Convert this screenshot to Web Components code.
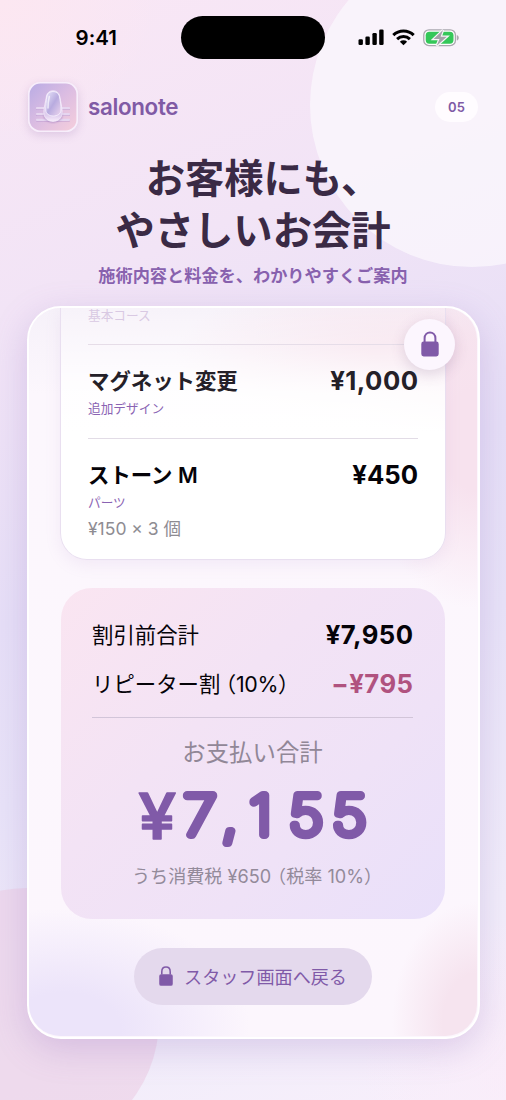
<!DOCTYPE html>
<html lang="ja">
<head>
<meta charset="utf-8">
<title>salonote</title>
<style>
html,body{margin:0;padding:0}
body{width:506px;height:1100px;overflow:hidden;font-family:Inter,"Noto Sans CJK JP",sans-serif;color:#050308}
</style>
</head>
<body>
<salon-screen>
  <status-bar></status-bar>
  <brand-header number="05">salonote</brand-header>
  <hero-title>
    <span slot="one">お客様にも、</span>
    <span slot="two">やさしいお会計</span>
    <span slot="sub">施術内容と料金を、わかりやすくご案内</span>
  </hero-title>
  <glass-panel>
    <receipt-list>
      <receipt-row class="faded" kind="基本コース"></receipt-row>
      <receipt-row class="soft" name="マグネット変更" kind="追加デザイン" price="¥1,000"></receipt-row>
      <receipt-row name="ストーン M" kind="パーツ" price="¥450" detail="¥150 × 3 個"></receipt-row>
    </receipt-list>
    <total-card></total-card>
    <staff-button>スタッフ画面へ戻る</staff-button>
  </glass-panel>
</salon-screen>
<script>
const define = (name, html, setup) => customElements.define(name, class extends HTMLElement {
  constructor() {
    super();
    this.attachShadow({ mode: 'open' });
  }
  connectedCallback() {
    if (this.shadowRoot.childNodes.length) return;
    this.shadowRoot.innerHTML = html;
    if (setup) setup(this, this.shadowRoot);
  }
});

define('salon-screen', `<style>
:host{display:flex;flex-direction:column;position:relative;width:506px;height:1100px;overflow:hidden;
background:radial-gradient(circle at 100% 97%,#faecf9b0 0,#faecf900 150px),radial-gradient(ellipse 160px 140px at 0 0,#fce7f1 0,#fce7f100 100%),linear-gradient(158deg,#f9e7f5 0%,#f2e4f6 24%,#e6dff7 48%,#e8e3f8 62%,#f1edfa 84%,#f8effb 100%)}
.orb{position:absolute;border-radius:50%}
.a{left:310px;top:-57px;width:324px;height:324px;background:#faf6fccc}
.b{left:-105px;top:888px;width:264px;height:264px;background:#eccfe5a0}
</style><div class="orb a"></div><div class="orb b"></div><slot></slot>`);

define('status-bar', `<style>
:host{display:grid;grid-template-columns:181px 144px 181px;align-items:center;height:43px;padding-top:16px;position:relative}
.time{padding-left:75.5px;font-size:20.5px;font-weight:600;line-height:24px;letter-spacing:.05px;color:#000}
.island{height:43px;border-radius:22px;background:#000}
.icons{display:flex;align-items:center;padding-left:33px;gap:8px}
svg{display:block}
</style>
<div class="time">9:41</div><div class="island"></div>
<div class="icons">
<svg width="26" height="17" viewBox="0 0 26 17"><rect x=".5" y="10.3" width="4.4" height="5.7" rx="1.3"/><rect x="7.4" y="7.4" width="4.4" height="8.6" rx="1.3"/><rect x="14.4" y="4" width="4.4" height="12" rx="1.3"/><rect x="21.2" y=".4" width="4.4" height="15.6" rx="1.3"/></svg>
<svg width="23" height="17" viewBox="0 0 23 17"><g fill="none" stroke="#000" stroke-width="3"><path d="M1.3 6.1a14.6 14.6 0 0 1 20.4 0"/><path d="M5.1 10.2a9.2 9.2 0 0 1 12.8 0"/></g><path d="M11.5 16.2 7.9 12.7a5.3 5.3 0 0 1 7.2 0z"/></svg>
<svg width="37" height="18" viewBox="0 0 37 18"><rect x=".8" y=".8" width="31.600" height="15.800" rx="5.2" fill="#fff" stroke="#a9a7ae" stroke-width="1.3"/><rect x="2.700" y="2.700" width="27.800" height="12" rx="3.6" fill="#34c759"/><path d="M33.8 6c2.600.8 2.600 4.800 0 5.600z" fill="#a9a7ae"/><path d="M20 1 10.600 10h5.900L13.700 16.800 23.800 7.800h-6.200z" fill="#a4a2a9" stroke="#f6f5f7" stroke-width="2.400" paint-order="stroke"/></svg>
</div>`);

define('app-icon', `<style>:host{display:block;width:50px;height:50px;border-radius:12px;box-shadow:0 3px 10px #8860a538}svg{display:block}</style>
<svg width="50" height="50" viewBox="0 0 50 50"><defs>
<linearGradient id="g" x1="0" y1="0" x2="1" y2="1"><stop stop-color="#b8abe4"/><stop offset=".5" stop-color="#dcbde2"/><stop offset="1" stop-color="#f6cfdc"/></linearGradient>
<linearGradient id="n" x1="0" y1="0" x2="1" y2="1"><stop stop-color="#eae6fa"/><stop offset=".5" stop-color="#b8abdf"/><stop offset="1" stop-color="#eed7ef"/></linearGradient>
<linearGradient id="s" x1="0" y1="0" x2="0" y2="1"><stop stop-color="#d0bfe8"/><stop offset=".8" stop-color="#dfcdee"/><stop offset="1" stop-color="#f8eefb"/></linearGradient>
<filter id="f"><feGaussianBlur stdDeviation="1.2"/></filter></defs>
<rect x=".8" y=".8" width="48.4" height="48.4" rx="11.5" fill="url(#g)" stroke="#f7eefb" stroke-width="1.6"/>
<g stroke-linecap="round" stroke-width="2.2"><path d="M9 27H41M9 32.9H41M9 38.7H41" stroke="#b391cc" opacity=".5"/><path d="M9 26.2H41M9 32.1H41M9 37.9H41" stroke="#e6d6f0"/></g>
<path d="M16 36q9 9 18 0v-6H16z" fill="#8b65b0" opacity=".55" filter="url(#f)"/>
<path d="M18.500 14c1-7 12-7 13.200 0 1 6 2.500 12 2.500 16.500 0 12-18.400 12-18.400 0 0-4.500 1.700-10.500 2.700-16.500z" fill="url(#s)" stroke="#f8effc" stroke-width=".7"/>
<path d="M18.900 14c1-6 11-6 12.400 0 1 5 1.800 9 1.700 14 0 8-15.200 8-15.200 0 0-4 .1-9 1.100-14z" fill="url(#n)" stroke="#faf5ff" stroke-width=".8"/>
<path d="M21.300 14.500q-1.400 6-1.300 11.500" fill="none" stroke="#fff" stroke-width="1.600" stroke-linecap="round" opacity=".65"/>
</svg>`);

define('brand-header', `<style>
:host{display:flex;align-items:center;height:50px;padding:22.500px 28px 0 27.500px;position:relative}
.name{margin:1px 0 0 10.500px;font-size:22.400px;font-weight:600;letter-spacing:-.35px;color:#805aa5;line-height:30px}
.num{margin-left:auto;width:43px;height:30px;border-radius:15px;background:#fffcff;display:flex;align-items:center;justify-content:center;font-size:13px;font-weight:600;color:#805aa5}
</style><app-icon></app-icon><span class="name"><slot></slot></span><span class="num"></span>`,
(h, r) => { r.querySelector('.num').textContent = h.getAttribute('number'); });

define('hero-title', `<style>
:host{display:flex;flex-direction:column;align-items:center;position:relative;padding-top:21.500px;height:153px;color:#3a2a45}
.line{font-size:39.300px;font-weight:700;line-height:52px;height:52px;white-space:nowrap}
.sub{margin-top:7px;font-size:17.200px;font-weight:700;line-height:24px;color:#8861ae;white-space:nowrap}
.first{padding-left:20px}
</style><div class="line first"><slot name="one"></slot></div><div class="line"><slot name="two"></slot></div><div class="sub"><slot name="sub"></slot></div>`);

define('lock-glyph', `<style>:host{display:block}svg{display:block;width:100%;height:auto}</style>
<svg viewBox="0 0 18 26"><path d="M3.600 11V7.300C3.600-.6 14.400-.6 14.400 7.300V11" fill="none" stroke="#805aa8" stroke-width="2"/><rect x=".3" y="10.500" width="17.400" height="15" rx="2.400" fill="#805aa8"/></svg>`);

define('glass-panel', `<style>
:host{display:flex;flex-direction:column;align-items:center;box-sizing:border-box;position:relative;width:453px;height:733px;margin:-.500px 0 0 26.500px;border:2.500px solid #fff;border-radius:34px;
box-shadow:0 10px 34px #8f68b842;background:#fcf6fd}
.inner{display:flex;flex-direction:column;align-items:center;width:448px;height:728px;overflow:hidden;border-radius:31.500px;
background:radial-gradient(ellipse 115px 170px at 100% 18%,#f7e2ee 30%,#f7e2ee00 100%),radial-gradient(ellipse 230px 75px at 84% 6%,#f6e1ec 15%,#f6e1ec00 100%),radial-gradient(ellipse 185px 120px at 8% 99%,#ece4fa 30%,#ece4fa00 100%),radial-gradient(ellipse 85px 120px at 100% 98%,#f6e4ef 40%,#f6e4ef00 100%),linear-gradient(180deg,#f6f1f9,#fcf7fd 12%,#fcf6fd)}
.lock{position:absolute;left:375.500px;top:11px;width:51px;height:51px;border-radius:50%;background:#fcf6fe;box-shadow:0 4px 14px #6b4a7a30;display:flex;align-items:center;justify-content:center}
lock-glyph{width:18px}
</style><div class="inner"><slot></slot></div><div class="lock"><lock-glyph></lock-glyph></div>`);

define('receipt-list', `<style>
:host{display:block;box-sizing:border-box;width:386px;height:252px;flex:none;padding:0 27px;border:1px solid #e9dff0;border-top:0;border-radius:0 0 27px 27px;
background:linear-gradient(180deg,#ffffff20 0,#ffffff60 40px,#ffffffdd 85px,#fff 125px);box-shadow:0 5px 16px #a57dbb1c}
</style><slot></slot>`);

define('receipt-row', `<style>
:host{display:block;box-sizing:border-box;height:93.500px;border-bottom:1px solid #e2dce6;padding-top:21px}
:host(:last-child){border-bottom:0;height:120px}
.top{display:flex;justify-content:space-between;align-items:center;height:30px}
.name{font-size:21.400px;font-weight:600;line-height:30px;white-space:nowrap}
.price{font-size:25.700px;font-weight:700;line-height:30px}
.kind{font-size:12.700px;font-weight:400;line-height:20px;color:#8a63b3;margin-top:3px}
.detail{font-size:17.500px;line-height:24px;color:#8e8c92;margin-top:4px}
:host(.soft) .top{color:#242028}
:host(.soft) .price{letter-spacing:.45px;margin-right:-.45px}
:host(.faded){height:39.500px;padding-top:0;border-color:#e6dde8}
:host(.faded) .kind{margin-top:-2px;color:#d9c9e3}
</style><div class="top"><span class="name"></span><span class="price"></span></div><div class="kind"></div><div class="detail"></div>`,
(h, r) => {
  for (const k of ['name', 'price', 'kind', 'detail']) {
    const e = r.querySelector('.' + k), v = h.getAttribute(k);
    if (v) e.textContent = v; else e.remove();
  }
  if (!h.hasAttribute('name')) r.querySelector('.top').remove();
});

define('total-card', `<style>
:host{display:block;box-sizing:border-box;width:384px;height:331px;flex:none;margin-top:28px;padding:32px 32px 0 31px;border-radius:31px;background:linear-gradient(135deg,#fae5f1 0%,#f3e3f5 38%,#efe2f7 68%,#e9e0fa 100%)}
.row{display:flex;justify-content:space-between;align-items:center;height:30px;font-size:21.400px;line-height:30px;white-space:nowrap}
.row b{font-size:25.700px;font-weight:700;letter-spacing:.45px;margin-right:-.450px}
.row + .row{margin-top:19px}
.row .off{color:#b0527f}
hr{border:0;height:1px;background:#d2c5d9;margin:18px 0 0}
.label{text-align:center;font-size:23.400px;line-height:32px;color:#918797;margin-top:19px}
svg{display:block;width:321px;height:84px;margin-top:1px}
text{font-family:Inter,sans-serif;font-size:55px;font-weight:100;fill:#805aa8;stroke:#805aa8;stroke-width:8px;stroke-linejoin:round;text-anchor:middle}
.yen{font-size:63px;font-weight:500;stroke-width:1.600px}
.tax{text-align:center;font-size:18.100px;line-height:26px;color:#938a9a;margin-top:9.500px;white-space:nowrap}
.p,.q{font-feature-settings:"halt"}.p{margin-left:6px}
.row .p{margin-left:5px}.ten{letter-spacing:-.4px}
</style>
<div class="row"><span>割引前合計</span><b>¥7,950</b></div>
<div class="row"><span>リピーター割<span class="p">（</span><span class="ten">10%</span><span class="q">）</span></span><b class="off">−¥795</b></div>
<hr>
<div class="label">お支払い合計</div>
<svg viewBox="0 -10 321 84"><text class="yen" transform="scale(1.08 1)" x="60.300" y="58.500">¥</text><text transform="scale(1.1 1)" x="98.200 125.500 153.200 194.500 234" y="55">7,155</text></svg>
<div class="tax">うち消費税 ¥650<span class="p">（</span>税率 10%<span class="q">）</span></div>`);

define('staff-button', `<style>
:host{display:flex;align-items:center;justify-content:center;gap:11px;box-sizing:border-box;width:238px;height:57px;flex:none;margin-top:29px;padding-top:1px;border-radius:28.500px;background:#e4d9ed;color:#805aa8;font-size:18.100px;line-height:26px;white-space:nowrap}
lock-glyph{width:14px}
</style><lock-glyph></lock-glyph><slot></slot>`);
</script>
</body>
</html>
